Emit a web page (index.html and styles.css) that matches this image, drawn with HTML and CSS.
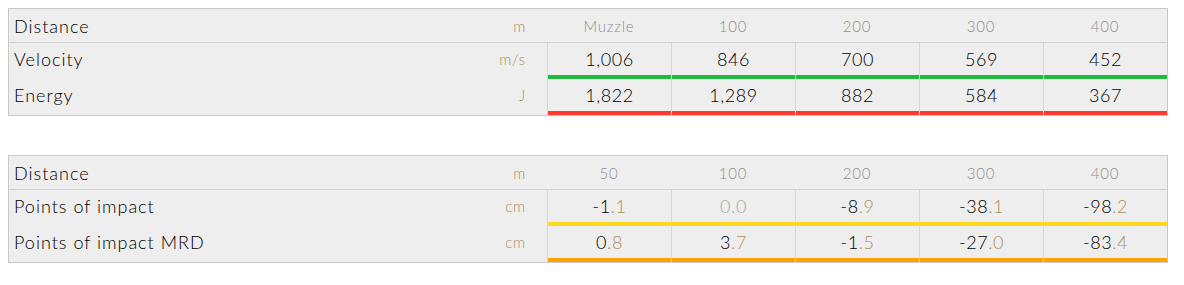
FILE: index.html
```html
<!DOCTYPE html>
<html>
<head>
<meta charset="utf-8">
<link rel="stylesheet" href="styles.css">
</head>
<body>
<div class="page">
  <div class="tbl">
    <div class="row head">
      <div class="lab"><span class="name">Distance</span><span class="unit">m</span></div>
      <div class="c">Muzzle</div><div class="c">100</div><div class="c">200</div><div class="c">300</div><div class="c">400</div>
    </div>
    <div class="row">
      <div class="lab"><span class="name">Velocity</span><span class="unit">m/s</span></div>
      <div class="c d green"><span class="v">1,006</span></div>
      <div class="c d green"><span class="v">846</span></div>
      <div class="c d green"><span class="v">700</span></div>
      <div class="c d green"><span class="v">569</span></div>
      <div class="c d green"><span class="v">452</span></div>
    </div>
    <div class="row">
      <div class="lab"><span class="name">Energy</span><span class="unit">J</span></div>
      <div class="c d red"><span class="v">1,822</span></div>
      <div class="c d red"><span class="v">1,289</span></div>
      <div class="c d red"><span class="v">882</span></div>
      <div class="c d red"><span class="v">584</span></div>
      <div class="c d red"><span class="v">367</span></div>
    </div>
  </div>

  <div class="tbl">
    <div class="row head">
      <div class="lab"><span class="name">Distance</span><span class="unit">m</span></div>
      <div class="c">50</div><div class="c">100</div><div class="c">200</div><div class="c">300</div><div class="c">400</div>
    </div>
    <div class="row">
      <div class="lab"><span class="name">Points of impact</span><span class="unit">cm</span></div>
      <div class="c d yellow"><span class="v">-1<span class="f">.1</span></span></div>
      <div class="c d yellow"><span class="v zero">0.0</span></div>
      <div class="c d yellow"><span class="v">-8<span class="f">.9</span></span></div>
      <div class="c d yellow"><span class="v">-38<span class="f">.1</span></span></div>
      <div class="c d yellow"><span class="v">-98<span class="f">.2</span></span></div>
    </div>
    <div class="row">
      <div class="lab"><span class="name">Points of impact MRD</span><span class="unit">cm</span></div>
      <div class="c d orange"><span class="v">0<span class="f">.8</span></span></div>
      <div class="c d orange"><span class="v">3<span class="f">.7</span></span></div>
      <div class="c d orange"><span class="v">-1<span class="f">.5</span></span></div>
      <div class="c d orange"><span class="v">-27<span class="f">.0</span></span></div>
      <div class="c d orange"><span class="v">-83<span class="f">.4</span></span></div>
    </div>
  </div>
</div>
</body>
</html>
```

FILE: styles.css
```css
html, body {
  margin: 0;
  padding: 0;
  background: #ffffff;
}
body {
  padding: 8px;
  font-family: "Lato", "Open Sans", sans-serif;
  font-weight: 300;
  color: #000000;
}
.page {
  display: flex;
  flex-direction: column;
  gap: 39px;
  width: 1160px;
}
.tbl {
  border: 1px solid #c8c8c8;
  background: #eeeeee;
}
.row {
  display: grid;
  grid-template-columns: 538px repeat(5, 124px);
  height: 36px;
}
.row.head {
  height: 33px;
  border-bottom: 1px solid #d4d4d4;
}
.lab {
  display: flex;
  align-items: center;
  justify-content: space-between;
  padding: 0 21px 0 5px;
}
.row:not(.head) .lab {
  padding-bottom: 4px;
}
.name {
  font-size: 18px;
  letter-spacing: 1px;
  color: #000000;
}
.unit {
  font-size: 15px;
  letter-spacing: 0.8px;
  color: #b08e58;
}
.c {
  display: flex;
  align-items: center;
  justify-content: center;
  font-size: 15px;
  letter-spacing: 0.8px;
  color: #8f8f8f;
}
.c.d {
  border-left: 1px solid #d8d8d8;
  flex-direction: column;
  align-items: stretch;
}
.v {
  flex: 1;
  display: flex;
  align-items: center;
  justify-content: center;
  font-size: 18px;
  letter-spacing: 0.6px;
  color: #000000;
}
.v.zero {
  color: #a8a8a8;
}
.f {
  color: #b08e58;
}
.c.d::after {
  content: "";
  display: block;
  height: 4px;
}
.green::after { background: #22b83e; }
.red::after { background: #ff3b30; }
.yellow::after { background: #ffd91f; }
.orange::after { background: #ffa200; }
```
